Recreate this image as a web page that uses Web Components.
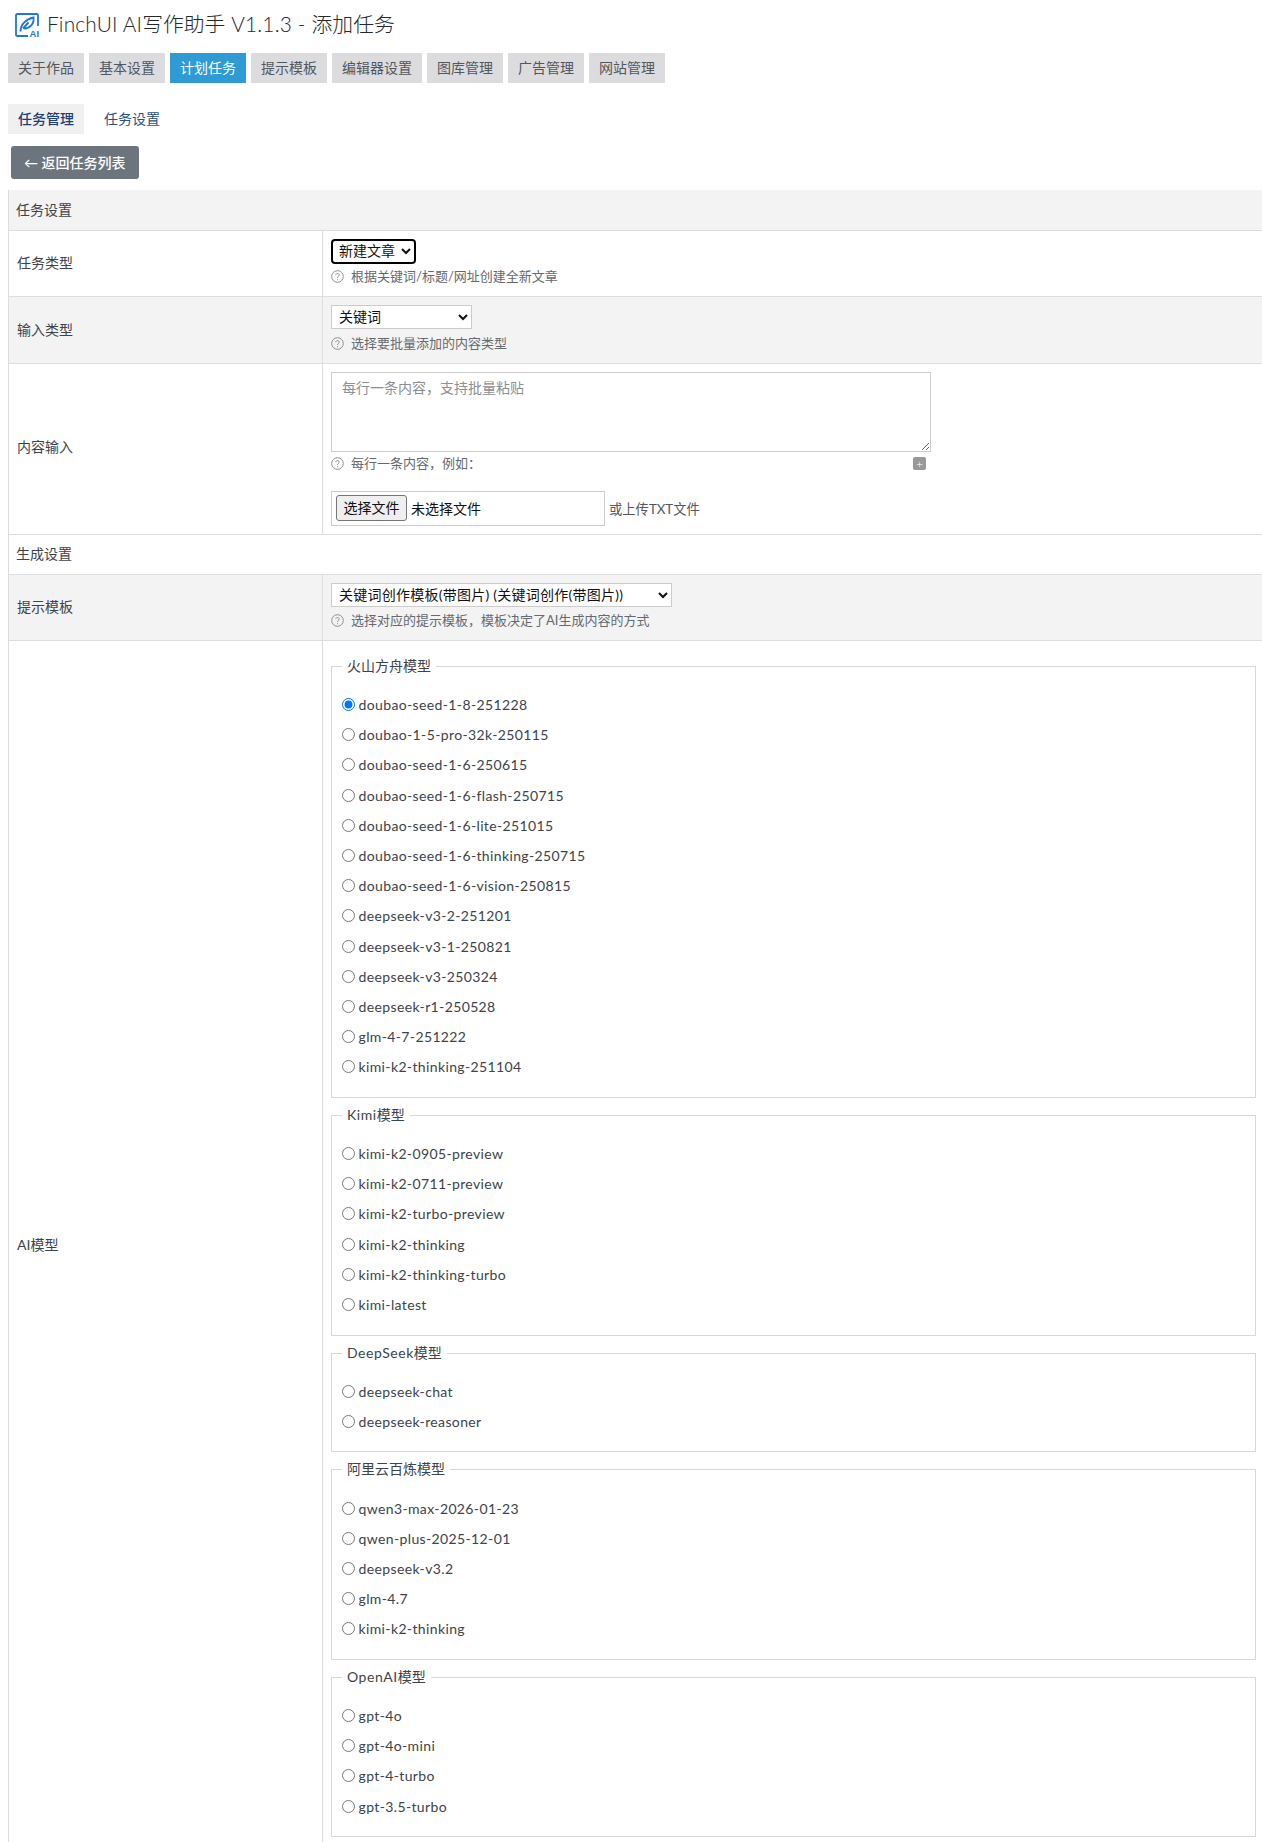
<!DOCTYPE html>
<html lang="zh-CN">
<head>
<meta charset="utf-8">
<title>FinchUI AI写作助手 - 添加任务</title>
<style>
  html { overflow: hidden; background: #fff; }
  body {
    margin: 0;
    padding: 0 0 0 8px;
    color: #3c434a;
    font: 14px/21px Lato, "Noto Sans CJK SC", sans-serif;
  }
</style>
</head>
<body>

<page-title><span style="letter-spacing:.2px">FinchUI AI</span>写作助手<span style="letter-spacing:.2px"> V1.1.3 - </span>添加任务</page-title>

<tab-bar>
  <tab-item>关于作品</tab-item>
  <tab-item>基本设置</tab-item>
  <tab-item active>计划任务</tab-item>
  <tab-item>提示模板</tab-item>
  <tab-item>编辑器设置</tab-item>
  <tab-item>图库管理</tab-item>
  <tab-item>广告管理</tab-item>
  <tab-item>网站管理</tab-item>
</tab-bar>

<sub-tabs>
  <sub-tab active>任务管理</sub-tab>
  <sub-tab>任务设置</sub-tab>
</sub-tabs>

<back-button>← 返回任务列表</back-button>

<form-table>
  <form-heading shade style="height:41px">任务设置</form-heading>

  <form-row label="任务类型" style="--pt:8px;--pb:9px">
    <native-select focused width="85" height="25" options="新建文章"></native-select>
    <help-text>根据关键词/标题/网址创建全新文章</help-text>
  </form-row>

  <form-row label="输入类型" shade style="--pt:8px;--pb:9px">
    <native-select width="141" options="关键词"></native-select>
    <help-text style="margin-top:4px">选择要批量添加的内容类型</help-text>
  </form-row>

  <form-row label="内容输入" style="--pt:8px;--pb:8px;--label-shift:5px">
    <content-input></content-input>
  </form-row>

  <form-heading style="line-height:37px">生成设置</form-heading>

  <form-row label="提示模板" shade style="--pt:8px;--pb:9px">
    <native-select width="341" spacing=".25" options="关键词创作模板(带图片) (关键词创作(带图片))"></native-select>
    <help-text style="margin-top:3px">选择对应的提示模板，模板决定了AI生成内容的方式</help-text>
  </form-row>

  <form-row label="AI模型" groups style="--label-shift:0px">
    <model-group legend="火山方舟模型" models="doubao-seed-1-8-251228,doubao-1-5-pro-32k-250115,doubao-seed-1-6-250615,doubao-seed-1-6-flash-250715,doubao-seed-1-6-lite-251015,doubao-seed-1-6-thinking-250715,doubao-seed-1-6-vision-250815,deepseek-v3-2-251201,deepseek-v3-1-250821,deepseek-v3-250324,deepseek-r1-250528,glm-4-7-251222,kimi-k2-thinking-251104" checked="doubao-seed-1-8-251228"></model-group>
    <model-group legend="Kimi模型" models="kimi-k2-0905-preview,kimi-k2-0711-preview,kimi-k2-turbo-preview,kimi-k2-thinking,kimi-k2-thinking-turbo,kimi-latest"></model-group>
    <model-group legend="DeepSeek模型" models="deepseek-chat,deepseek-reasoner"></model-group>
    <model-group legend="阿里云百炼模型" models="qwen3-max-2026-01-23,qwen-plus-2025-12-01,deepseek-v3.2,glm-4.7,kimi-k2-thinking"></model-group>
    <model-group legend="OpenAI模型" models="gpt-4o,gpt-4o-mini,gpt-4-turbo,gpt-3.5-turbo"></model-group>
  </form-row>
</form-table>

<script>
// Small helper so every element below is just a class plus a template string.
function define(tag, html, setup) {
  customElements.define(tag, class extends HTMLElement {
    constructor() {
      super();
      this.attachShadow({ mode: "open" });
    }
    connectedCallback() {
      this.shadowRoot.innerHTML = typeof html === "function" ? html(this) : html;
      if (setup) setup(this);
    }
  });
}

define("page-title", `
  <style>
    :host { display: flex; align-items: center; height: 53px; color: #23282d;
      font-size: 20.8px; font-weight: 300; gap: 8px; padding: 0 0 7px 7px; box-sizing: border-box; }
    svg { flex: none; margin-top: 4px; overflow: visible; }
  </style>
  <svg width="24" height="24" viewBox="0 0 24 24" fill="none" stroke="#1d78d6" stroke-width="1.8">
    <path d="M14 1H2.200A1.200 1.200 0 0 0 1 2.200v19.600A1.200 1.200 0 0 0 2.200 23H13M14 1h7.800A1.200 1.200 0 0 1 23 2.200V13"/>
    <path d="M5.500 18.500C5.500 11.500 11 6 18.500 4.500c.8 6.500-3.500 11-9.500 11M8 15.500l5.500-6" stroke-width="1.900"/>
    <text x="14.600" y="23.500" font-family="Liberation Sans" font-size="9.500" font-weight="700" fill="#1d78d6" stroke="none">AI</text>
  </svg>
  <span><slot></slot></span>`);

define("tab-bar", `
  <style>:host { display: flex; gap: 5px; height: 30px; }</style>
  <slot></slot>`);

define("tab-item", `
  <style>
    :host { display: block; padding: 0 10px; height: 30px; line-height: 30px;
      background: #dcdcde; color: #50575e; }
    :host([active]) { background: #2e9bd4; color: #fff; }
  </style>
  <slot></slot>`);

define("sub-tabs", `
  <style>:host { display: flex; height: 30px; margin-top: 21px; }</style>
  <slot></slot>`);

define("sub-tab", `
  <style>
    :host { display: block; padding: 0 10px; height: 30px; line-height: 30px; color: #2c5282; margin-right: 10px; }
    :host([active]) { background: #f0f0f1; color: #1d4073; font-weight: 500; }
  </style>
  <slot></slot>`);

define("back-button", `
  <style>
    :host { display: table; margin: 12px 0 11px 3px; height: 33px; line-height: 33px; padding: 0 13px;
      background: #6c757d; color: #fff; border-radius: 3px; font-weight: 500; box-sizing: border-box; }
  </style>
  <slot></slot>`);

define("form-table", `
  <style>
    :host { display: block; width: calc(100% + 3px); box-sizing: border-box;
      border-left: 1px solid #ddd; }
  </style>
  <slot></slot>`);

define("form-heading", `
  <style>
    :host { display: block; height: 40px; line-height: 39px; padding-left: 7px; box-sizing: border-box;
      border-bottom: 1px solid #ddd; color: #3c434a; }
    :host([shade]) { background: #f3f3f3; }
  </style>
  <slot></slot>`);

define("form-row", (el) => `
  <style>
    :host { display: grid; grid-template-columns: 314px 1fr; border-bottom: 1px solid #ddd; box-sizing: border-box; }
    :host([shade]) { background: #f3f3f3; }
    .label { display: flex; align-items: center; padding: 0 0 var(--label-shift, 2px) 8px; border-right: 1px solid #ddd; }
    .body { padding: var(--pt, 9px) 8px var(--pb, 9px) 8px; min-width: 0; }
    :host([groups]) .body { padding: 14px 9px 0 8px; display: flex; flex-direction: column; gap: 6px; height: 1206px; box-sizing: border-box; }
  </style>
  <div class="label">${el.getAttribute("label")}</div>
  <div class="body"><slot></slot></div>`);

define("native-select", (el) => `
  <style>
    :host { display: block; }
    select { display: block; width: ${el.getAttribute("width")}px; height: ${el.getAttribute("height") || 24}px; box-sizing: border-box; margin: 0;
      padding: 0 3px 2px; background: #fff; color: #111; border: 1px solid #ccc; border-radius: 0;
      letter-spacing: ${el.getAttribute("spacing") || 0}px;
      font: 14px Lato, "Noto Sans CJK SC", sans-serif; }
    :host([focused]) select { border: 2px solid #000; border-radius: 4px; padding: 0 2px 2px; }
  </style>
  <select>${el.getAttribute("options")
    .split("|")
    .map((o) => `<option>${o}</option>`)
    .join("")}</select>`);

define("help-text", `
  <style>
    :host { display: flex; align-items: center; gap: 7px; margin-top: 2px; height: 21px; color: #646970; font-size: 13px; }
    svg { flex: none; }
  </style>
  <svg width="13" height="13" viewBox="0 0 13 13" fill="none" stroke="#8f8f8f" stroke-width="1">
    <circle cx="6.500" cy="6.500" r="5.800"/>
    <path d="M4.800 5.200c0-2.200 3.400-2.200 3.400-.1 0 1.300-1.700 1.300-1.700 2.900M6.500 9.200v1"/>
  </svg>
  <span><slot></slot></span>`);

define("content-input", `
  <style>
    :host { display: block; }
    textarea { display: block; box-sizing: border-box; width: 600px; height: 80px; margin: 0; padding: 4px 10px;
      border: 1px solid #ccc; border-radius: 0; font: 14px/21px Lato, "Noto Sans CJK SC", sans-serif; color: #333; }
    textarea::placeholder { color: #8c8f94; opacity: 1; }
    .hint { display: flex; width: 600px; align-items: center; justify-content: space-between; margin-top: 1px; height: 21px; padding-right: 5px; box-sizing: border-box; }
    .plus { width: 13px; height: 13px; background: #999; border-radius: 2px; color: #fff; font: 300 12px/13px Lato, sans-serif; text-align: center; }
    help-text { margin-top: 0; }
    .upload { display: flex; align-items: flex-end; gap: 4px; margin-top: 17px; }
    .file { display: flex; align-items: center; width: 274px; height: 35px; box-sizing: border-box; border: 1px solid #ccc; padding: 0 4px 1px; background: #fff; color: #111; }
    .choose { display: block; width: 71px; height: 26px; box-sizing: border-box; margin-right: 4px; padding: 0 0 2px; background: #efefef; border: 1px solid #767676; border-radius: 3px; color: #111; font: 14px "Noto Sans CJK SC", sans-serif; }
    .or { color: #50575e; line-height: 33px; height: 33px; font-size: 13.300px; }
  </style>
  <textarea placeholder="每行一条内容，支持批量粘贴"></textarea>
  <div class="hint"><help-text>每行一条内容，例如：</help-text><span class="plus">+</span></div>
  <div class="upload">
    <div class="file"><button class="choose" type="button">选择文件</button>未选择文件</div>
    <span class="or">或上传TXT文件</span>
  </div>`);

define("model-group", (el) => {
  const checked = el.getAttribute("checked");
  const items = el.getAttribute("models").split(",").map((m) => `
    <label><input type="radio" name="model" ${m === checked ? "checked" : ""}><span>${m}</span></label>`).join("");
  const legend = el.getAttribute("legend").replace(/[A-Za-z]+/, (w) => `<span class="latin">${w}</span>`);
  return `
  <style>
    :host { display: block; flex: none; }
    fieldset { margin: 0; padding: 11.500px 10px 15px; border: 1px solid #d8d8d8; }
    legend { padding: 0 5px 2px; color: #3c434a; }
    .latin { letter-spacing: .55px; }
    label { display: flex; align-items: center; height: 30.200px; color: #3c434a; letter-spacing: .37px; }
    input { width: 13px; height: 13px; margin: 0 3.500px 0 0; flex: none; }
  </style>
  <fieldset><legend>${legend}</legend>${items}</fieldset>`;
});
</script>
</body>
</html>
